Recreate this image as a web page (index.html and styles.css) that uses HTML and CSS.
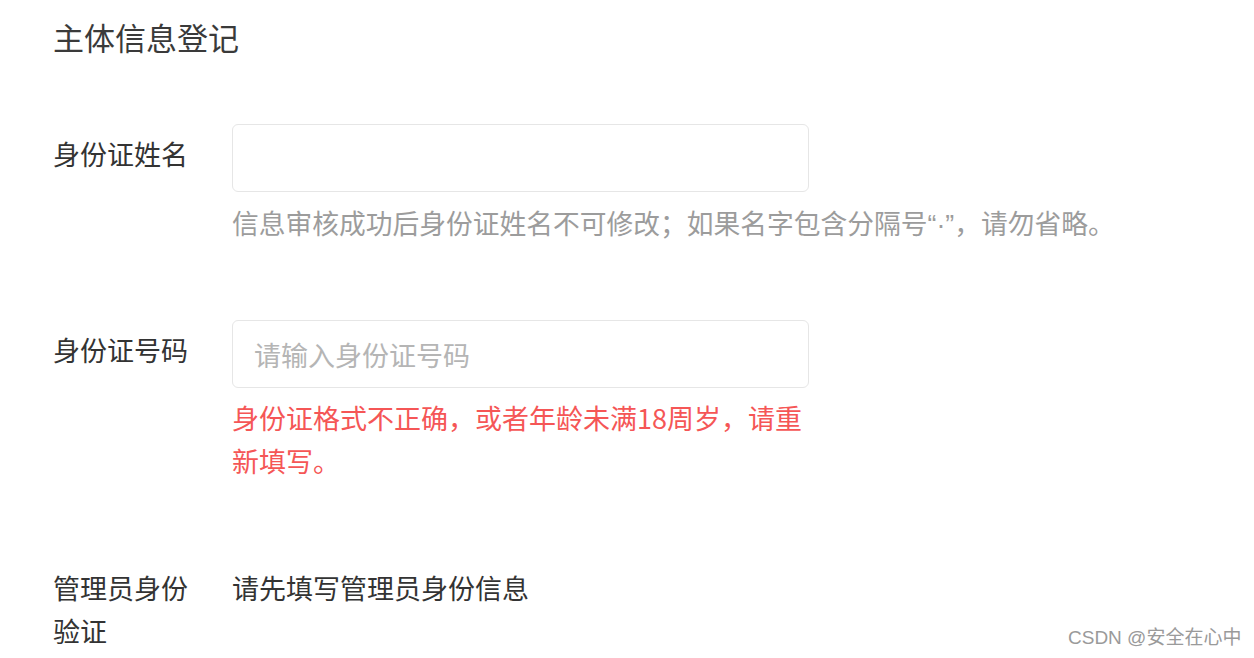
FILE: index.html
```html
<!DOCTYPE html>
<html lang="zh-CN">
<head>
<meta charset="utf-8">
<title>主体信息登记</title>
<link rel="stylesheet" href="styles.css">
</head>
<body>
<div class="page">
  <h1 class="title">主体信息登记</h1>
  <div class="form">
    <div class="item">
      <div class="label">身份证姓名</div>
      <div class="control">
        <div class="input"></div>
        <div class="hint">信息审核成功后身份证姓名不可修改；如果名字包含分隔号<span class="latin">“·”</span>，请勿省略。</div>
      </div>
    </div>
    <div class="item">
      <div class="label">身份证号码</div>
      <div class="control">
        <div class="input"><span class="placeholder">请输入身份证号码</span></div>
        <div class="error">身份证格式不正确，或者年龄未满18周岁，请重新填写。</div>
      </div>
    </div>
    <div class="item">
      <div class="label">管理员身份验证</div>
      <div class="control">
        <div class="value">请先填写管理员身份信息</div>
      </div>
    </div>
  </div>
  <div class="watermark">CSDN @安全在心中</div>
</div>
</body>
</html>
```
FILE: styles.css
```css
html, body {
  margin: 0;
  padding: 0;
  background: #ffffff;
}
body {
  font-family: "Noto Sans CJK SC", "Noto Sans", sans-serif;
  color: #333333;
  width: 1254px;
  height: 658px;
  overflow: hidden;
}
.page {
  position: relative;
  height: 658px;
  padding-left: 53px;
  box-sizing: border-box;
}
.title {
  margin: 0;
  padding-top: 15px;
  font-size: 31px;
  font-weight: 400;
  line-height: 43px;
  color: #3a3a3a;
}
.form {
  display: flex;
  flex-direction: column;
  gap: 76px;
  margin-top: 66px;
}
.item {
  display: grid;
  grid-template-columns: 179px 577px;
}
.label {
  width: 150px;
  font-size: 27px;
  line-height: 43px;
  padding-top: 8px;
  color: #333333;
}
.control {
  display: flex;
  flex-direction: column;
}
.input {
  box-sizing: border-box;
  width: 577px;
  height: 68px;
  border: 1px solid #e6e6e6;
  border-radius: 6px;
  background: #fff;
  display: flex;
  align-items: center;
  padding-left: 21px;
}
.placeholder {
  font-size: 27px;
  color: #b5b5b5;
}
.hint {
  margin-top: 9px;
  height: 43px;
  font-size: 26.75px;
  line-height: 43px;
  color: #9c9c9c;
  white-space: nowrap;
}
.latin {
  font-family: "Liberation Sans", sans-serif;
  line-height: 1;
}
.error {
  margin-top: 8px;
  font-size: 27px;
  line-height: 43px;
  color: #f55656;
}
.value {
  font-size: 27px;
  line-height: 43px;
  padding-top: 8px;
  color: #333333;
}
.watermark {
  position: absolute;
  left: 1068px;
  top: 625px;
  font-size: 19px;
  line-height: 26px;
  color: #9a9a9a;
  font-family: "Liberation Sans", "Noto Sans CJK SC", sans-serif;
  white-space: nowrap;
}
```
